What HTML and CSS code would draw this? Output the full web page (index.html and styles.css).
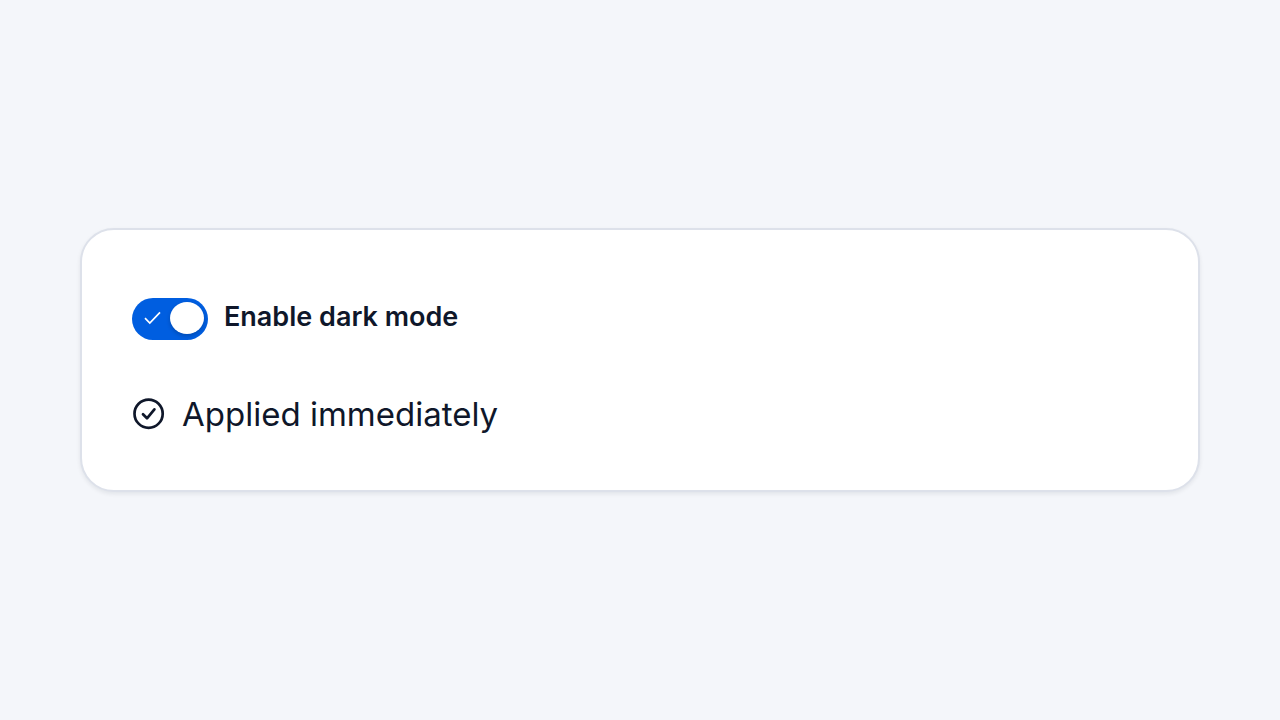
FILE: index.html
```html
<!DOCTYPE html>
<html lang="en">
<head>
<meta charset="utf-8">
<meta name="viewport" content="width=device-width, initial-scale=1">
<title>Appearance</title>
<link rel="stylesheet" href="styles.css">
</head>
<body>
<main class="card">
  <div class="setting">
    <span class="switch">
      <input class="switch-input" type="checkbox" role="switch" id="dark-mode" checked>
      <svg class="switch-check" viewBox="0 0 18 18" aria-hidden="true"><path d="M2 9.2 6.8 14 17 3.4"/></svg>
      <span class="switch-knob"></span>
    </span>
    <label class="setting-label" for="dark-mode">Enable dark mode</label>
  </div>
  <p class="status">
    <svg class="status-icon" viewBox="0 0 34 34" aria-hidden="true"><circle cx="16.6" cy="16.7" r="14.1"/><path d="M11 17.2 15 21.3 22.4 12.4"/></svg>
    <span>Applied immediately</span>
  </p>
</main>
</body>
</html>
```
FILE: styles.css
```css
* {
  box-sizing: border-box;
}

body {
  display: flex;
  align-items: center;
  min-height: 100vh;
  margin: 0;
  padding: 40px 80px;
  background: #f4f6fa;
  color: #0f172a;
  font-family: Inter, "Liberation Sans", sans-serif;
}

.card {
  display: flex;
  flex: 1;
  flex-direction: column;
  gap: 48px;
  padding: 68px 50px 50px;
  border: 2px solid #dde1ea;
  border-radius: 34px;
  background: #fff;
  box-shadow: 0 2px 4px rgba(15, 23, 42, 0.08);
}

.setting,
.status {
  display: flex;
  align-items: center;
  gap: 16px;
  margin: 0;
}

.switch {
  position: relative;
  display: flex;
  width: 76px;
  height: 42px;
}

.switch-input {
  width: 100%;
  height: 100%;
  margin: 0;
  border-radius: 21px;
  background: #005ee0;
  appearance: none;
  cursor: pointer;
}

.switch-check {
  position: absolute;
  top: 11px;
  left: 11px;
  width: 18px;
  height: 18px;
  fill: none;
  stroke: #fff;
  stroke-width: 1.7;
  pointer-events: none;
}

.switch-knob {
  position: absolute;
  top: 4px;
  right: 4px;
  width: 34px;
  height: 32px;
  border-radius: 50%;
  background: #fff;
  box-shadow: 0 2px 4px rgba(0, 0, 0, 0.2);
  pointer-events: none;
}

.setting-label {
  padding-bottom: 4px;
  font-size: 27px;
  font-weight: 600;
  line-height: 36px;
  cursor: pointer;
}

.status {
  font-size: 33px;
  line-height: 52px;
}

.status-icon {
  width: 34px;
  height: 34px;
  fill: none;
  stroke: #0f172a;
  stroke-width: 2.7;
  stroke-linecap: round;
  stroke-linejoin: round;
}
```
